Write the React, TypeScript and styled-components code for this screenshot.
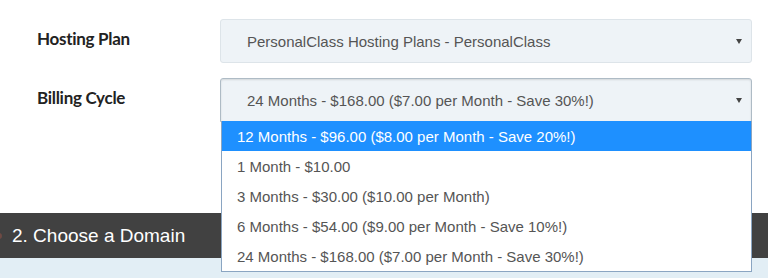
import React, { useState } from 'react'
import styled, { createGlobalStyle } from 'styled-components'

type OptionProps = {
  active?: boolean
}

type SelectBoxProps = {
  focused?: boolean
}

const GlobalStyle = createGlobalStyle`
  html, body {
    margin: 0;
    padding: 0;
    background: #fff;
    overflow: hidden;
  }
  body {
    font-family: "Liberation Sans", Arial, sans-serif;
  }
`

const Page = styled.div`
  width: 768px;
  height: 278px;
  display: flex;
  flex-direction: column;
  background: #fff;
`
const Form = styled.section`
  display: flex;
  flex-direction: column;
  gap: 15px;
  padding-top: 19px;
`
const Row = styled.div`
  display: grid;
  grid-template-columns: 220px 532px;
  align-items: center;
`
const Label = styled.label`
  padding: 0 0 5px 37px;
  font-family: Lato, "Open Sans", sans-serif;
  font-weight: 700;
  font-size: 17px;
  letter-spacing: -0.3px;
  color: #222;
`
const SelectWrap = styled.div`
  position: relative;
`
const SelectBox = styled.div<SelectBoxProps>`
  box-sizing: border-box;
  height: 44px;
  display: flex;
  align-items: center;
  justify-content: space-between;
  padding: 0 9px 0 26px;
  background: #eef3f7;
  border: 1px solid ${p => (p.focused ? '#aebbc5' : '#dde4e9')};
  border-radius: ${p => (p.focused ? '3px 3px 0 0' : '3px')};
  box-shadow: ${p => (p.focused ? 'inset 0 1px 2px rgba(0,0,0,0.12)' : 'none')};
  font-size: 15px;
  color: #555;
`
const Caret = styled.span`
  width: 0;
  height: 0;
  border-left: 3px solid transparent;
  border-right: 3px solid transparent;
  border-top: 5px solid #444;
`
const OptionList = styled.ul`
  position: absolute;
  top: 43px;
  left: 1px;
  right: 0;
  margin: 0;
  padding: 0;
  list-style: none;
  background: #fff;
  border: 1px solid #8aa5c2;
  border-top: none;
  z-index: 2;
`
const Option = styled.li<OptionProps>`
  height: 30px;
  display: flex;
  align-items: center;
  padding-left: 15px;
  font-size: 15px;
  color: ${p => (p.active ? '#fff' : '#555')};
  background: ${p => (p.active ? '#1e90ff' : '#fff')};
`
const Spacer = styled.div`
  height: 91px;
`
const StepBar = styled.div`
  height: 45px;
  display: flex;
  align-items: center;
  gap: 10px;
  background: #414141;
  color: #fff;
  font-size: 19px;
`
const StepDot = styled.span`
  width: 6px;
  height: 6px;
  margin-left: -4px;
  border-radius: 50%;
  background: #6e4a44;
`
const Strip = styled.div`
  flex: 1;
  background: #e2eef5;
`

const cycles = [
  '12 Months - $96.00 ($8.00 per Month - Save 20%!)',
  '1 Month - $10.00',
  '3 Months - $30.00 ($10.00 per Month)',
  '6 Months - $54.00 ($9.00 per Month - Save 10%!)',
  '24 Months - $168.00 ($7.00 per Month - Save 30%!)'
]

function App() {
  const [hovered] = useState(0)

  return (
    <Page>
      <GlobalStyle />
      <Form>
        <Row>
          <Label>Hosting Plan</Label>
          <SelectBox>
            <span>PersonalClass Hosting Plans - PersonalClass</span>
            <Caret />
          </SelectBox>
        </Row>
        <Row>
          <Label>Billing Cycle</Label>
          <SelectWrap>
            <SelectBox focused>
              <span>24 Months - $168.00 ($7.00 per Month - Save 30%!)</span>
              <Caret />
            </SelectBox>
            <OptionList>
              {cycles.map((c, i) => (
                <Option key={c} active={i === hovered}>{c}</Option>
              ))}
            </OptionList>
          </SelectWrap>
        </Row>
      </Form>
      <Spacer />
      <StepBar>
        <StepDot />
        <span>2. Choose a Domain</span>
      </StepBar>
      <Strip />
    </Page>
  )
}

export default App
